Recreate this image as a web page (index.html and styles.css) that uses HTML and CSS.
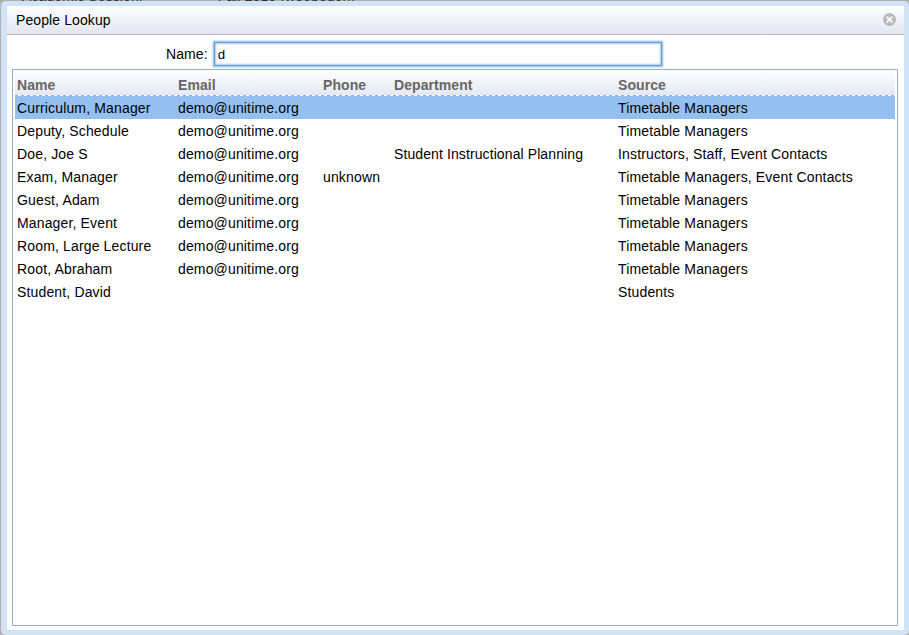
FILE: index.html
```html
<!DOCTYPE html>
<html lang="en">
<head>
<meta charset="utf-8">
<title>People Lookup</title>
<link rel="stylesheet" href="styles.css">
</head>
<body>
<div class="backdrop"><span>Academic Session:</span><span class="session">Fall 2010 (woebegon)</span></div>
<div class="dialog">
  <div class="panel">
    <header class="caption">
      <span>People Lookup</span>
      <svg class="close" viewBox="0 0 13 13" width="13" height="13"><circle cx="6.5" cy="6.5" r="6.5" fill="#b9b9b9"/><path d="M3.6 3.6l5.8 5.8M9.4 3.6l-5.8 5.8" stroke="#f6f6f6" stroke-width="2"/></svg>
    </header>
    <div class="search">
      <label for="name">Name:</label>
      <input id="name" type="text" value="d">
    </div>
    <div class="results">
      <table>
        <colgroup><col class="c-name"><col class="c-email"><col class="c-phone"><col class="c-dept"><col></colgroup>
        <thead><tr><th>Name</th><th>Email</th><th>Phone</th><th>Department</th><th>Source</th></tr></thead>
        <tbody>
          <tr class="selected"><td>Curriculum, Manager</td><td>demo@unitime.org</td><td></td><td></td><td>Timetable Managers</td></tr>
          <tr><td>Deputy, Schedule</td><td>demo@unitime.org</td><td></td><td></td><td>Timetable Managers</td></tr>
          <tr><td>Doe, Joe S</td><td>demo@unitime.org</td><td></td><td>Student Instructional Planning</td><td>Instructors, Staff, Event Contacts</td></tr>
          <tr><td>Exam, Manager</td><td>demo@unitime.org</td><td>unknown</td><td></td><td>Timetable Managers, Event Contacts</td></tr>
          <tr><td>Guest, Adam</td><td>demo@unitime.org</td><td></td><td></td><td>Timetable Managers</td></tr>
          <tr><td>Manager, Event</td><td>demo@unitime.org</td><td></td><td></td><td>Timetable Managers</td></tr>
          <tr><td>Room, Large Lecture</td><td>demo@unitime.org</td><td></td><td></td><td>Timetable Managers</td></tr>
          <tr><td>Root, Abraham</td><td>demo@unitime.org</td><td></td><td></td><td>Timetable Managers</td></tr>
          <tr><td>Student, David</td><td></td><td></td><td></td><td>Students</td></tr>
        </tbody>
      </table>
    </div>
  </div>
</div>
</body>
</html>
```
FILE: styles.css
```css
* { box-sizing: border-box; }
body {
  margin: 0;
  height: 635px;
  padding: 1px 0 0 1px;
  overflow: hidden;
  background: #b0b0b0;
  font: 14px/23px "Liberation Sans", Arial, sans-serif;
  letter-spacing: 0.1px;
  color: #000;
}
/* Page behind the dialog, only its last pixel row shows above the frame. */
.backdrop {
  position: absolute;
  top: -15px;
  left: 22px;
  display: flex;
  gap: 75px;
  color: #333;
}
.dialog {
  position: relative;
  height: 634px;
  padding: 5px 5px 5px 6px;
  border-radius: 5px;
  background: #d0e4f6;
}
.panel {
  height: 624px;
  display: flex;
  flex-direction: column;
  background: #fff;
}
.caption {
  height: 29px;
  display: flex;
  align-items: center;
  justify-content: space-between;
  padding: 0 8px 0 9px;
  border-bottom: 1px solid #bbb;
  background: linear-gradient(#fff, #e1e5f1);
}
.close { display: block; margin-top: -1px; }
.search {
  height: 34px;
  display: flex;
  align-items: center;
  padding: 4px 0 0 159px;
  gap: 6px;
}
.search input {
  width: 448px;
  height: 24px;
  padding: 0 3px;
  border: 1px solid #6b9dcd;
  outline: 0;
  box-shadow: 0 0 2px 1px #82b5e4, inset 0 0 2px 1px #a8cbeb;
  font: 13.3px "Liberation Sans", Arial, sans-serif;
}
.results {
  flex: 1;
  margin: 0 6px 4px 5px;
  padding: 1px 2px;
  border: 1px solid #9aaed0;
}
table {
  width: 880px;
  table-layout: fixed;
  border-collapse: separate;
  border-spacing: 0;
}
.c-name { width: 161px; }
.c-email { width: 145px; }
.c-phone { width: 71px; }
.c-dept { width: 224px; }
th, td {
  height: 23px;
  padding: 2px 2px 0;
  line-height: 21px;
  text-align: left;
  white-space: nowrap;
}
td { letter-spacing: 0.15px; }
td:nth-child(4) { letter-spacing: 0.1px; }
thead tr {
  background:
    repeating-linear-gradient(90deg, #9bafcf 0 3px, #fff 3px 6px) bottom / 100% 1px no-repeat,
    linear-gradient(#fff, #e3e7f2);
}
th {
  height: 25px;
  padding-top: 4px;
  letter-spacing: 0.08px;
  color: #666;
}
.selected { background: #93c0f0; }
```
